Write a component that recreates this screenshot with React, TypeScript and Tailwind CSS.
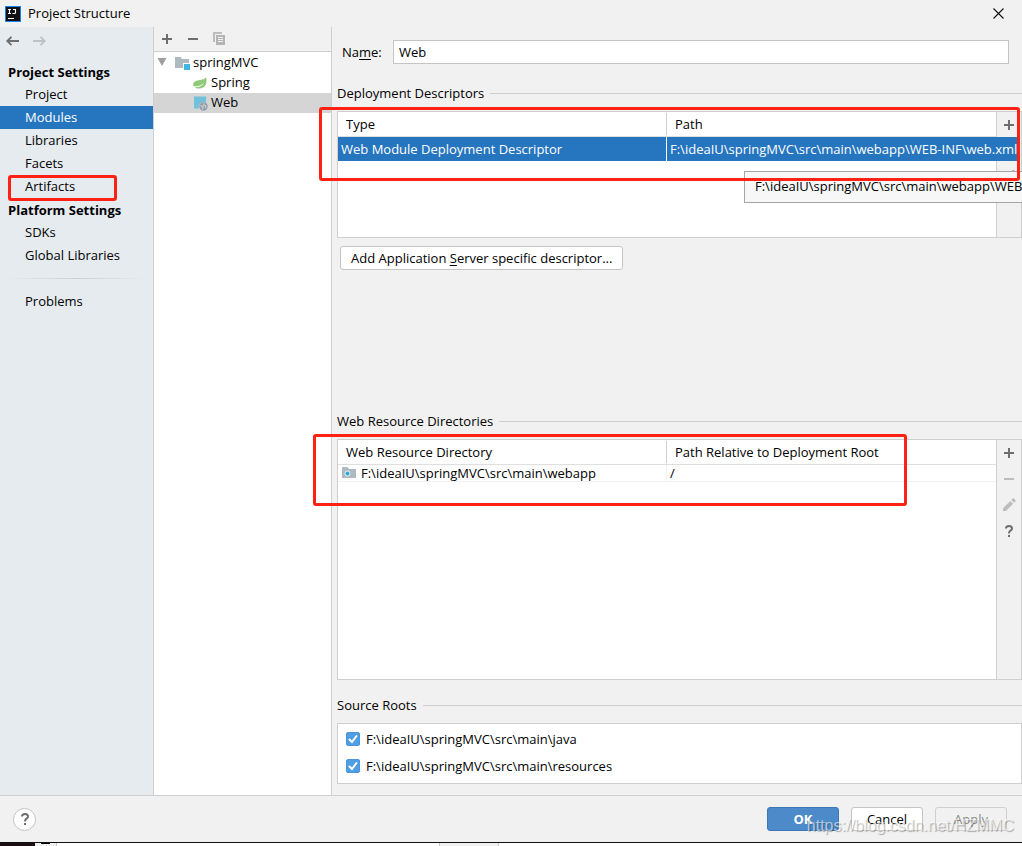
import React, { useState } from 'react';

interface NavItem {
    label: string;
    active?: boolean;
    marked?: boolean;
}

const projectItems: NavItem[] = [
    { label: 'Project' },
    { label: 'Modules', active: true },
    { label: 'Libraries' },
    { label: 'Facets' },
    { label: 'Artifacts', marked: true },
];

const platformItems: NavItem[] = [{ label: 'SDKs' }, { label: 'Global Libraries' }];

const sourceRoots = ['F:\\ideaIU\\springMVC\\src\\main\\java', 'F:\\ideaIU\\springMVC\\src\\main\\resources'];

const descriptorPath = 'F:\\ideaIU\\springMVC\\src\\main\\webapp\\WEB-INF\\web.xml';

const App: React.FC = () => {
    return (
        <div className="relative flex min-h-screen flex-col overflow-hidden bg-[#f1f1f1] font-['Open_Sans','Noto_Sans',sans-serif] text-[13px] leading-5 text-black">
            <header className="flex h-[27px] items-center pl-[5px] pr-4">
                <LogoIcon />
                <h1 className="ml-[7px] flex-1 pb-px">Project Structure</h1>
                <button aria-label="Close" className="flex size-4 items-center justify-center">
                    <CloseIcon />
                </button>
            </header>

            <div className="flex flex-1">
                <Sidebar />
                <ModuleTree />
                <ModuleEditor />
            </div>

            <Footer />

            {/* Sliver of the window behind */}
            <div className="flex h-1 border-t border-[#111111] bg-white">
                <div className="w-[35px] bg-[#1c0f14]" />
                <div className="flex w-[22px] justify-center border-r border-[#c8c8c8] bg-[#f1f1f1]">
                    <div className="h-px w-[9px] bg-black" />
                </div>
                <div className="ml-[382px] w-[60px] border-x border-[#c8c8c8] bg-[#f1f1f1]" />
            </div>
        </div>
    );
};

const Sidebar = () => (
    <nav className="w-[154px] shrink-0 border-r border-[#cfcfcf] bg-[#e6ebf0]">
        <div className="flex h-[33px] items-start gap-[10px] pl-[5px] pt-[6px]">
            <button aria-label="Back">
                <ArrowIcon className="text-[#6e6e6e]" />
            </button>
            <button aria-label="Forward" disabled>
                <ArrowIcon className="rotate-180 text-[#bfc2c5]" />
            </button>
        </div>
        <h2 className="flex h-[23px] items-center pl-2 font-bold">Project Settings</h2>
        {projectItems.map((item) => (
            <NavLink key={item.label} {...item} />
        ))}
        <h2 className="flex h-[23px] items-center pl-2 font-bold">Platform Settings</h2>
        {platformItems.map((item) => (
            <NavLink key={item.label} {...item} />
        ))}
        <div className="mx-1 my-[11px] h-px bg-linear-to-r from-transparent via-[#cdd1d5] to-transparent" />
        <NavLink label="Problems" />
    </nav>
);

const NavLink: React.FC<NavItem> = ({ label, active, marked }) => (
    <a
        href="#"
        className={`relative flex h-[23px] items-center pb-[2px] pl-[25px] ${active ? 'bg-[#2675bf] text-white' : ''}`}
    >
        {label}
        {marked && <Marker className="left-2 top-0 h-[26px] w-[109px]" />}
    </a>
);

const ModuleTree = () => (
    <div className="flex w-[178px] shrink-0 flex-col border-r border-[#cfcfcf] bg-white">
        <div className="flex h-[25px] items-center gap-[10px] border-b border-[#cfcfcf] bg-[#f1f1f1] pl-[5px]">
            <button aria-label="Add">
                <PlusIcon />
            </button>
            <button aria-label="Remove">
                <MinusIcon className="text-[#6e6e6e]" />
            </button>
            <button aria-label="Copy">
                <CopyIcon />
            </button>
        </div>
        <ul className="pt-px">
            <li className="flex h-5 items-center pl-[3px]">
                <svg width="10" height="10" viewBox="0 0 10 10" className="mr-[7px]">
                    <path d="M0.5 0h9L5 8z" fill="#a0a0a0" />
                </svg>
                <ModuleIcon />
                <span className="ml-[3px] pb-[2px]">springMVC</span>
            </li>
            <li className="flex h-5 items-center pl-[38px]">
                <SpringIcon />
                <span className="ml-[3px] pb-[2px]">Spring</span>
            </li>
            <li className="flex h-5 items-center bg-[#d5d5d5] pl-[38px]">
                <WebIcon />
                <span className="ml-[3px] pb-[2px]">Web</span>
            </li>
        </ul>
    </div>
);

const ModuleEditor = () => (
    <main className="flex min-w-0 flex-1 flex-col pb-[11px] pl-[5px] pt-[13px]">
        <div className="flex items-center pl-[5px] pr-[13px]">
            <label htmlFor="facet-name" className="w-[51px] pb-px">
                Na<u className="underline-offset-2">m</u>e:
            </label>
            <input
                id="facet-name"
                defaultValue="Web"
                className="h-6 min-w-0 flex-1 border border-[#c4c4c4] bg-white px-[5px] pb-px outline-none"
            />
        </div>

        <section className="mt-[19px] flex-1">
            <SectionTitle>Deployment Descriptors</SectionTitle>
            <div className="relative mt-2 flex h-[127px] border border-[#cfcfcf] bg-white">
                <div className="min-w-0 flex-1">
                    <table className="w-full table-fixed border-separate border-spacing-0 text-left">
                        <HeaderRow first="Type" second="Path" />
                        <tbody>
                            <tr className="h-6 bg-[#2675bf] text-white">
                                <td className="border-r border-white py-0 pl-[3px]">Web Module Deployment Descriptor</td>
                                <td className="relative p-0">
                                    <span className="absolute left-0 top-0 z-10 h-6 whitespace-nowrap bg-[#2675bf] pl-[3px] pr-px leading-6">
                                        {descriptorPath}
                                    </span>
                                </td>
                            </tr>
                        </tbody>
                    </table>
                </div>
                <div className="flex w-[25px] flex-col items-center gap-[10px] border-l border-[#cfcfcf] bg-[#f1f1f1] pt-[5px]">
                    <button aria-label="Add descriptor">
                        <PlusIcon />
                    </button>
                    <button aria-label="Remove descriptor">
                        <MinusIcon className="text-[#6e6e6e]" />
                    </button>
                    <button aria-label="Edit descriptor">
                        <PencilIcon className="text-[#6e6e6e]" />
                    </button>
                </div>
                <div
                    role="tooltip"
                    className="absolute -right-px top-[59px] z-10 h-8 w-[278px] overflow-hidden whitespace-nowrap border border-r-0 border-[#a5a5a5] bg-[#f7f7f7] pl-[10px] pt-1"
                >
                    {descriptorPath}
                </div>
                <Marker className="-left-[19px] right-px -top-[5px] h-[74px]" />
            </div>
            <button className="ml-[3px] mt-2 h-6 rounded-[3px] border border-[#c4c4c4] bg-white px-[10px] leading-5">
                Add Application <u className="underline-offset-2">S</u>erver specific descriptor...
            </button>
        </section>

        <section>
            <SectionTitle>Web Resource Directories</SectionTitle>
            <div className="relative mt-2 flex h-[241px] border border-[#cfcfcf] bg-white">
                <div className="min-w-0 flex-1">
                    <table className="w-full table-fixed border-separate border-spacing-0 text-left">
                        <HeaderRow first="Web Resource Directory" second="Path Relative to Deployment Root" />
                        <tbody>
                            <tr className="h-[17px] leading-4">
                                <td className="border-b border-r border-[#f2f2f2] py-0 pl-[3px]">
                                    <span className="flex items-center gap-1">
                                        <WebFolderIcon />
                                        F:\ideaIU\springMVC\src\main\webapp
                                    </span>
                                </td>
                                <td className="border-b border-[#f2f2f2] py-0 pl-[3px]">/</td>
                            </tr>
                        </tbody>
                    </table>
                </div>
                <div className="flex w-[25px] flex-col items-center gap-[10px] border-l border-[#cfcfcf] bg-[#f1f1f1] pt-[5px]">
                    <button aria-label="Add directory">
                        <PlusIcon />
                    </button>
                    <button aria-label="Remove directory" disabled>
                        <MinusIcon className="text-[#bdbdbd]" />
                    </button>
                    <button aria-label="Edit directory" disabled>
                        <PencilIcon className="text-[#bdbdbd]" />
                    </button>
                    <button aria-label="Help on directories">
                        <QuestionIcon />
                    </button>
                </div>
                <Marker className="-left-[25px] right-[114px] -top-[6px] h-[72px]" />
            </div>
        </section>

        <section className="mt-[15px]">
            <SectionTitle>Source Roots</SectionTitle>
            <div className="mt-2 border border-[#cfcfcf] bg-white pb-1 pl-2 pt-px">
                {sourceRoots.map((root) => (
                    <RootCheckbox key={root} path={root} />
                ))}
            </div>
        </section>
    </main>
);

const SectionTitle: React.FC<{ children: React.ReactNode }> = ({ children }) => (
    <h3 className="flex items-center gap-[6px] after:h-px after:flex-1 after:bg-[#cfcfcf]">{children}</h3>
);

const HeaderRow: React.FC<{ first: string; second: string }> = ({ first, second }) => (
    <thead>
        <tr className="h-[25px]">
            <th className="relative border-b border-[#dfdfdf] py-0 pl-2 font-normal after:absolute after:right-0 after:top-px after:h-[22px] after:w-px after:bg-[#cfcfcf]">
                {first}
            </th>
            <th className="border-b border-[#dfdfdf] py-0 pl-2 font-normal">{second}</th>
        </tr>
    </thead>
);

const RootCheckbox: React.FC<{ path: string }> = ({ path }) => {
    const [checked, setChecked] = useState(true);

    return (
        <label className="flex h-[27px] items-center pt-px">
            <span className="relative mr-[6px] size-[14px]">
                <input
                    type="checkbox"
                    checked={checked}
                    onChange={() => setChecked(!checked)}
                    className="block size-[14px] appearance-none rounded-xs border border-[#b0b0b0] bg-white checked:border-[#4a94dc] checked:bg-[#4f9ee3]"
                />
                {checked && (
                    <svg className="pointer-events-none absolute inset-0" width="14" height="14" viewBox="0 0 14 14" fill="none" stroke="#fff" strokeWidth="2" strokeLinecap="round">
                        <path d="M3.5 7.5 6 10l4.5-6" />
                    </svg>
                )}
            </span>
            {path}
        </label>
    );
};

const Footer = () => (
    <footer className="relative flex h-[47px] items-center border-t border-[#cfcfcf] pl-[13px] pr-[15px]">
        <button aria-label="Help" className="flex size-[23px] items-center justify-center rounded-full border border-[#c4c4c4] bg-white">
            <QuestionIcon />
        </button>
        <div className="ml-auto flex gap-3">
            <button className="h-6 w-[72px] rounded-[3px] border border-[#3d77b5] bg-[#4d8ac9] font-bold text-white">OK</button>
            <button className="h-6 w-[72px] rounded-[3px] border border-[#c4c4c4] bg-white">Cancel</button>
            <button className="h-6 w-[72px] rounded-[3px] border border-[#cfcfcf] text-[#8c8c8c]" disabled>
                Apply
            </button>
        </div>
        <span className="pointer-events-none absolute right-2 top-5 font-['Liberation_Sans',sans-serif] text-base leading-5 text-white/60 [text-shadow:1px_1px_1px_rgba(0,0,0,0.3)]">
            https://blog.csdn.net/HZMMC
        </span>
    </footer>
);

const Marker: React.FC<{ className: string }> = ({ className }) => (
    <div className={`pointer-events-none absolute z-20 rounded-[3px] border-3 border-[#ff2113] ${className}`} />
);

const LogoIcon = () => (
    <svg width="16" height="16" viewBox="0 0 16 16">
        <rect width="16" height="16" fill="#1683f5" />
        <rect x="1" y="1" width="14" height="14" fill="#121214" />
        <path d="M3 3.5h3M4.5 3.5v4M3 7.500h3M8 3.500h3M10.500 3.500v3q0 1-1 1H7.500" fill="none" stroke="#fff" strokeWidth="1.1" />
        <path d="M3 12.500h6" stroke="#fff" strokeWidth="1" />
    </svg>
);

const CloseIcon = () => (
    <svg width="11" height="11" viewBox="0 0 11 11" stroke="#111" strokeWidth="1.1">
        <path d="M0.5 0.5l10 10M10.5 0.5l-10 10" />
    </svg>
);

const ArrowIcon: React.FC<{ className: string }> = ({ className }) => (
    <svg width="16" height="16" viewBox="0 0 16 16" fill="none" stroke="currentColor" strokeWidth="1.9" className={className}>
        <path d="M14 8H2.5M6.5 3.8 2.3 8l4.2 4.2" />
    </svg>
);

const PlusIcon = () => (
    <svg width="16" height="16" viewBox="0 0 16 16" stroke="#6e6e6e" strokeWidth="2" className="block">
        <path d="M3 8h10M8 3v10" />
    </svg>
);

const MinusIcon: React.FC<{ className: string }> = ({ className }) => (
    <svg width="16" height="16" viewBox="0 0 16 16" stroke="currentColor" strokeWidth="2" className={`block ${className}`}>
        <path d="M3 8h10" />
    </svg>
);

const CopyIcon = () => (
    <svg width="16" height="16" viewBox="0 0 16 16" className="block">
        <path d="M2 1h9v2H4v8H2z" fill="#bdbdbd" />
        <path d="M5 4h9v10H5zM7 6v1h5V6zM7 8v1h5V8zM7 10v1h5v-1z" fill="#b4b4b4" fillRule="evenodd" />
    </svg>
);

const PencilIcon: React.FC<{ className: string }> = ({ className }) => (
    <svg width="16" height="16" viewBox="0 0 16 16" fill="currentColor" className={`block ${className}`}>
        <path d="M2 11.2 9.3 3.9l2.9 2.9L4.9 14H2z" />
        <path d="M10.2 3 11.6 1.6q0.7-0.6 1.4 0l1.4 1.4q0.6 0.7 0 1.4L13.1 5.8z" />
    </svg>
);

const QuestionIcon = () => (
    <svg width="16" height="16" viewBox="0 0 16 16" fill="none" stroke="#6e6e6e" strokeWidth="2" className="block">
        <path d="M5 5.6Q5 3 8 3t3 2.5q0 1.2-1.5 2.2T8 10.5" />
        <path d="M7 13h2" />
    </svg>
);

const ModuleIcon = () => (
    <svg width="16" height="16" viewBox="0 0 16 16">
        <path d="M1 2h5.5l1.500 2h7v4H9v5H1z" fill="#aeb9c0" />
        <rect x="10" y="9" width="6" height="6" fill="#40b6e0" />
    </svg>
);

const SpringIcon = () => (
    <svg width="16" height="16" viewBox="0 0 16 16">
        <path d="M14 2.300C15.300 7 14.500 13.500 7 13.500c-2 0-3.500-.5-4.500-1.300C6 12.500 10 11.500 12.500 7.500 9.500 10.800 5 11.600 1.300 11.300.2 6.500 4.500 5.200 8 4.900c2.800-.2 4.600-.8 6-2.600z" fill="#8fca7a" />
    </svg>
);

const WebIcon = () => (
    <svg width="16" height="16" viewBox="0 0 16 16">
        <path d="M2 1.500h12v6A5 5 0 0 0 7 13.500H2z" fill="#72c1dc" />
        <circle cx="11.500" cy="11.500" r="4.200" fill="#93a0aa" />
        <path d="M8.500 10.500l2.500 1.300-.5 2.500M11.500 8.500l.3 1.700 1.700.6.3 2" fill="none" stroke="#d5d5d5" strokeWidth="1.100" />
    </svg>
);

const WebFolderIcon = () => (
    <svg width="16" height="16" viewBox="0 0 16 16">
        <path d="M1 2h5.500l1.500 2h7v9H1z" fill="#aeb9c0" />
        <circle cx="6.500" cy="8.500" r="2.900" fill="#dceff6" />
        <circle cx="6.500" cy="8.500" r="2" fill="#35a9d6" />
    </svg>
);

export default App;
